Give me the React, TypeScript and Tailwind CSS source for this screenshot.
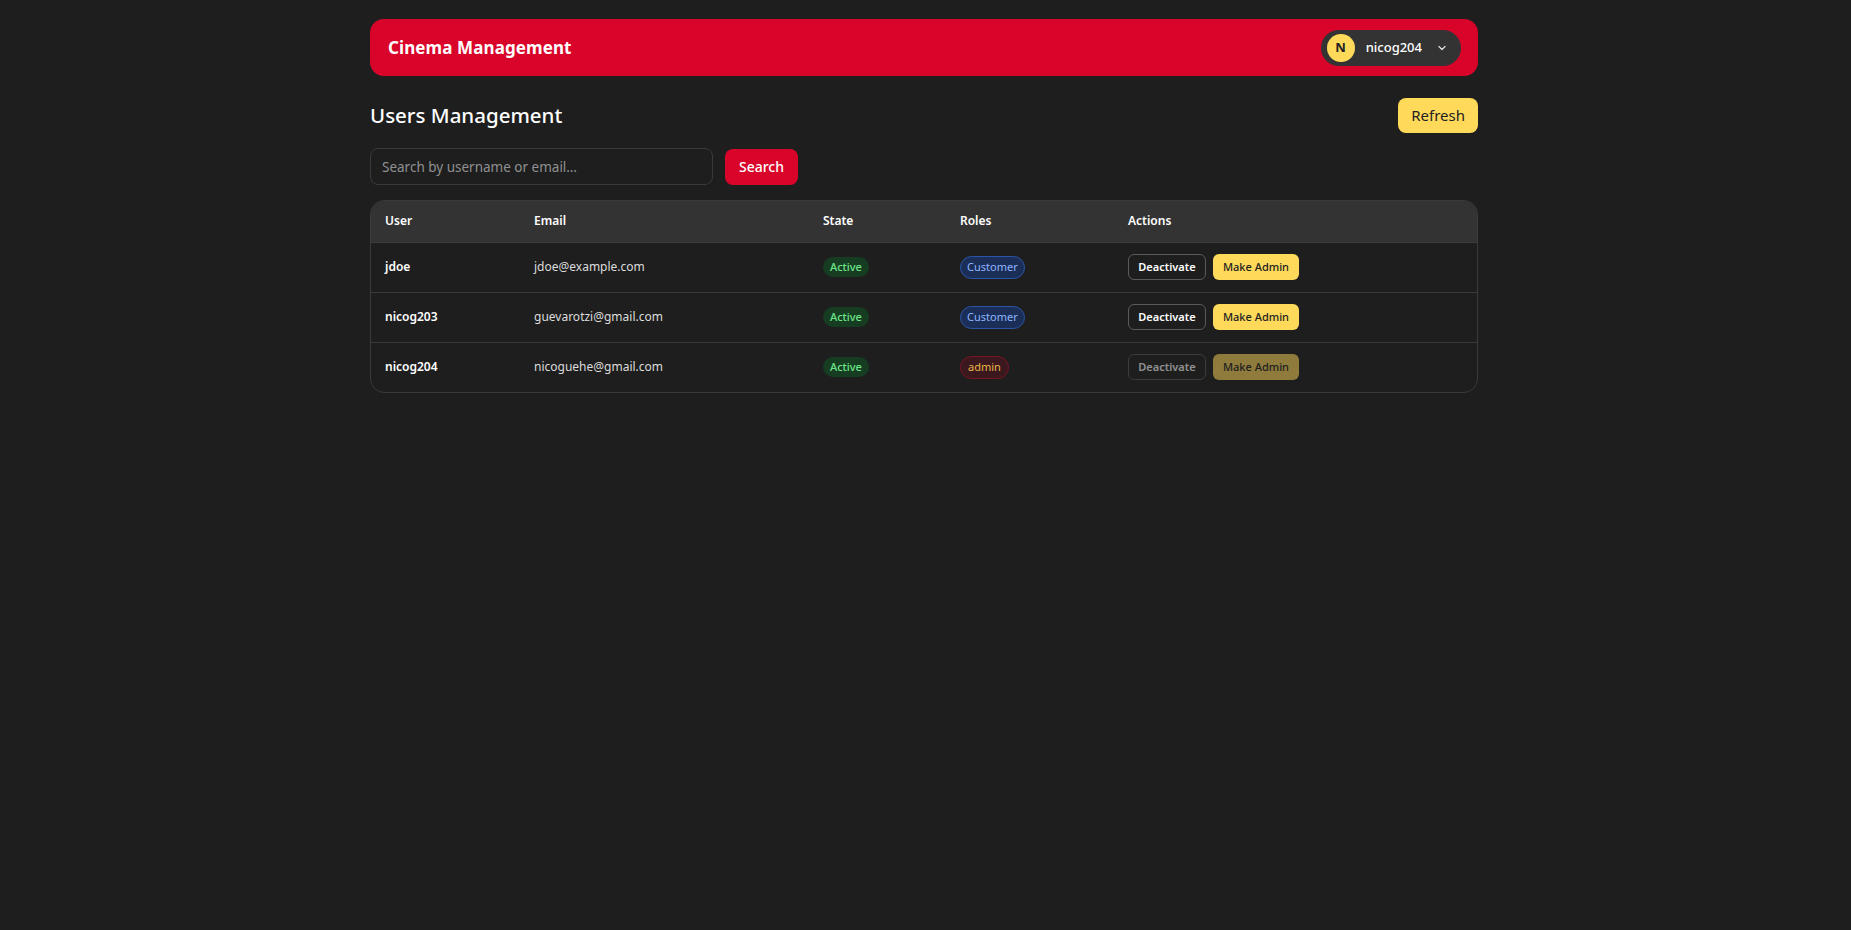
import { ChevronDown } from "lucide-react";

type User = {
  username: string;
  email: string;
  active: boolean;
  role: "Customer" | "admin";
  self?: boolean;
};

const users: User[] = [
  { username: "jdoe", email: "jdoe@example.com", active: true, role: "Customer" },
  { username: "nicog203", email: "guevarotzi@gmail.com", active: true, role: "Customer" },
  { username: "nicog204", email: "nicoguehe@gmail.com", active: true, role: "admin", self: true },
];

function RoleBadge({ role }: { role: User["role"] }) {
  if (role === "admin") {
    return (
      <span className="inline-flex h-[23px] items-center rounded-full border border-[#7a1426] bg-[#3b181d] px-[7px] text-[11px] text-[#e8b64a]">
        admin
      </span>
    );
  }
  return (
    <span className="inline-flex h-[23px] items-center rounded-full border border-[#2b55a8] bg-[#1b2e57] px-[6px] text-[11px] text-[#8fb5ff]">
      {role}
    </span>
  );
}

export default function App() {
  return (
    <div
      className="min-h-screen bg-[#1e1e1e] pr-[3px] text-white"
      style={{ fontFamily: '"Noto Sans", "Open Sans", sans-serif' }}
    >
      <div className="mx-auto w-[1108px] pt-[19px]">
        {/* Top bar */}
        <header className="flex h-[57px] items-center justify-between rounded-[14px] bg-[#d90429] pl-[18px] pr-[17px]">
          <h1 className="text-[17px] font-bold tracking-[0.1px]">Cinema Management</h1>
          <button className="flex h-9 items-center gap-[11px] rounded-full bg-[#333333] pl-[6px] pr-[13px]">
            <span className="flex h-[28px] w-[28px] items-center justify-center rounded-full bg-[#ffd95a] text-[13px] font-bold text-[#222]">
              N
            </span>
            <span className="text-[13px] font-medium">nicog204</span>
            <ChevronDown size={12} strokeWidth={2.5} className="ml-[3px] text-[#ddd]" />
          </button>
        </header>

        {/* Title row */}
        <div className="mt-[22px] flex items-center justify-between">
          <h2 className="text-[20.5px] font-medium">Users Management</h2>
          <button className="h-[35px] rounded-lg bg-[#ffd95a] px-[13px] text-[15px] text-[#222]">Refresh</button>
        </div>

        {/* Search */}
        <div className="mt-[15px] flex items-center gap-3">
          <input
            placeholder="Search by username or email…"
            className="h-[37px] w-[343px] rounded-lg border border-[#3a3a3a] bg-[#1e1e1e] px-[11px] text-[13.5px] text-white outline-none placeholder:text-[#909090]"
          />
          <button className="h-9 w-[73px] rounded-lg bg-[#d90429] text-[14px] font-medium text-white">Search</button>
        </div>

        {/* Table */}
        <div className="mt-[15px] overflow-hidden rounded-[14px] border border-[#3a3a3a]">
          <table className="w-full border-collapse text-left text-[12px]">
            <thead>
              <tr className="h-[41px] bg-[#333333]">
                <th className="w-[149px] pl-[14px] font-semibold">User</th>
                <th className="w-[289px] pl-[14px] font-semibold">Email</th>
                <th className="w-[137px] pl-[14px] font-semibold">State</th>
                <th className="w-[168px] pl-[14px] font-semibold">Roles</th>
                <th className="pl-[14px] font-semibold">Actions</th>
              </tr>
            </thead>
            <tbody>
              {users.map((u) => (
                <tr key={u.username} className="h-[50px] border-t border-[#3a3a3a]">
                  <td className="pl-[14px] font-semibold">{u.username}</td>
                  <td className="pl-[14px] text-[#dcdcdc]">{u.email}</td>
                  <td className="pl-[14px]">
                    <span className="inline-flex h-[20px] items-center rounded-full bg-[#163d22] px-[7px] text-[11px] font-medium text-[#6ee48a]">
                      Active
                    </span>
                  </td>
                  <td className="pl-[14px]">
                    <RoleBadge role={u.role} />
                  </td>
                  <td className="pl-[14px]">
                    <div className={`flex items-center gap-[7px] ${u.self ? "opacity-50" : ""}`}>
                      <button className="h-[26px] w-[78px] rounded-md border border-[#5a5a5a] text-[11px] font-semibold text-white">
                        Deactivate
                      </button>
                      <button className="h-[26px] w-[86px] rounded-md bg-[#ffd95a] text-[11px] font-medium text-[#222]">
                        Make Admin
                      </button>
                    </div>
                  </td>
                </tr>
              ))}
            </tbody>
          </table>
        </div>
      </div>
    </div>
  );
}
